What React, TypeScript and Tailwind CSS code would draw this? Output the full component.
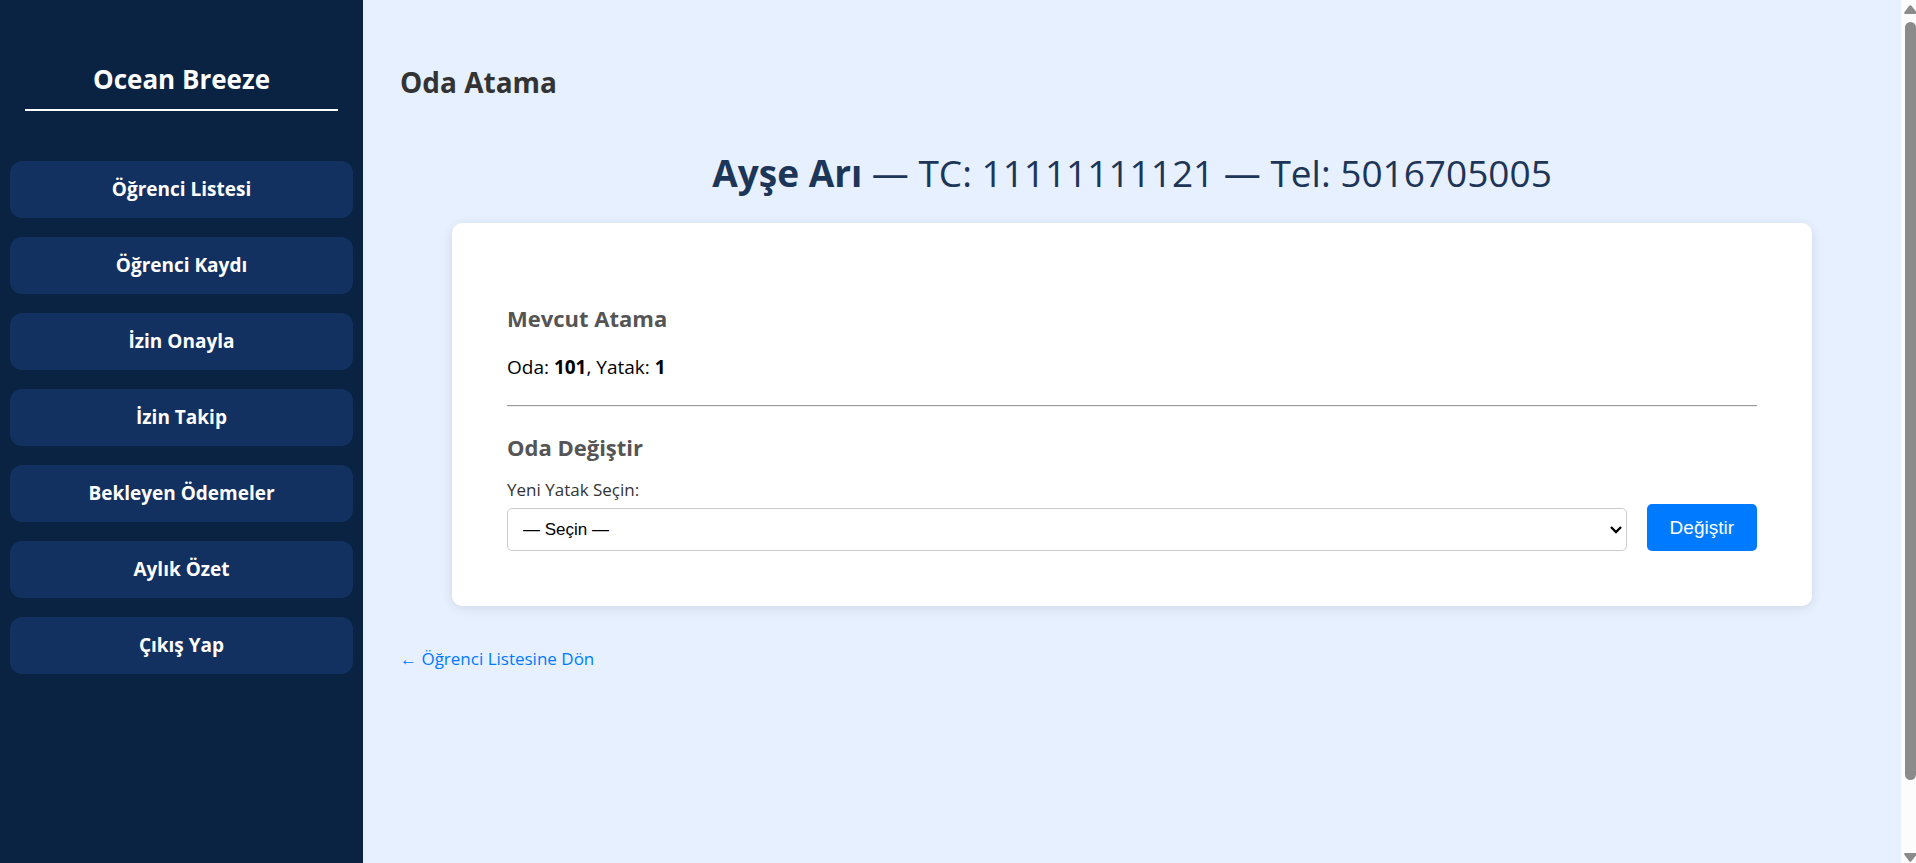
const navItems = [
  'Öğrenci Listesi',
  'Öğrenci Kaydı',
  'İzin Onayla',
  'İzin Takip',
  'Bekleyen Ödemeler',
  'Aylık Özet',
  'Çıkış Yap',
];

function Sidebar() {
  return (
    <aside className="flex w-[363px] shrink-0 flex-col bg-[#0a2342] px-2.5 pt-[61px] text-white">
      <h2 className="mx-[15px] border-b-2 border-white pb-[11px] text-center text-[26px] leading-[37px] font-bold">
        Ocean Breeze
      </h2>
      <nav className="mt-[50px] flex flex-col gap-[19px]">
        {navItems.map((item) => (
          <a
            key={item}
            href="#"
            className="rounded-xl bg-[#133160] py-4 text-center text-[19px] leading-[25px] font-bold"
          >
            {item}
          </a>
        ))}
      </nav>
    </aside>
  );
}

function AssignmentCard() {
  return (
    <section className="mx-auto w-full max-w-[1360px] rounded-[10px] bg-white px-[55px] pt-[79px] pb-[55px] shadow-[0_2px_12px_rgba(0,0,0,0.1)]">
      <h3 className="text-[22px] leading-8 font-bold text-[#555]">Mevcut Atama</h3>
      <p className="mt-5 text-[19px] leading-[26px] text-black">
        Oda: <strong>101</strong>, Yatak: <strong>1</strong>
      </p>
      <hr className="mt-[25px] border-t border-b border-t-[#9a9a9a] border-b-[#eee]" />
      <h3 className="mt-6 text-[22px] leading-8 font-bold text-[#555]">Oda Değiştir</h3>
      <form className="mt-[15px] flex items-end gap-5" onSubmit={(e) => e.preventDefault()}>
        <div className="flex flex-1 flex-col gap-1.5">
          <label htmlFor="bed" className="text-[17px] leading-6 text-[#333]">
            Yeni Yatak Seçin:
          </label>
          <div className="grid items-center">
            <select
              id="bed"
              className="col-start-1 row-start-1 h-[43px] w-full appearance-none rounded-[5px] border border-[#ccc] bg-white px-[15px] font-['Liberation_Sans',sans-serif] text-[17px] text-black"
            >
              <option>— Seçin —</option>
            </select>
            <svg
              aria-hidden="true"
              className="pointer-events-none col-start-1 row-start-1 mr-[5px] justify-self-end"
              width="12"
              height="9"
              viewBox="0 0 12 9"
              fill="none"
              stroke="#000"
              strokeWidth="2.3"
            >
              <path d="M1 2 6 7 11 2" />
            </svg>
          </div>
        </div>
        <button
          type="submit"
          className="rounded-[5px] bg-[#007bff] px-[23px] py-3 font-['Liberation_Sans',sans-serif] text-[19px] leading-[23px] text-white"
        >
          Değiştir
        </button>
      </form>
    </section>
  );
}

function ScrollTrack() {
  return (
    <div aria-hidden="true" className="flex w-[15px] shrink-0 flex-col bg-[#fcfcfc] pt-[5px] pb-px pl-[3px]">
      <svg width="12" height="9" viewBox="0 0 12 9" fill="#8b8b8b">
        <path d="M5.2.7Q6.3-.4 7.4.7L12 6.6V9H1Q-.2 9 .4 7.2Z" />
      </svg>
      <div className="mt-2 ml-px flex flex-1 flex-col">
        <div className="grow-[758] basis-0 rounded-full bg-[#8b8b8b]" />
        <div className="grow-[73] basis-0" />
      </div>
      <svg width="12" height="9" viewBox="0 0 12 9" fill="#8b8b8b">
        <path d="M5.2 8.3Q6.3 9.4 7.4 8.3L12 2.4V0H1Q-.2 0 .4 1.8Z" />
      </svg>
    </div>
  );
}

export default function App() {
  return (
    <div className="flex min-h-screen bg-[#e6f0ff] font-['Open_Sans',sans-serif]">
      <Sidebar />
      <main className="min-w-0 flex-1 px-[37px] pt-[62px]">
        <h1 className="text-[28px] leading-10 font-bold text-[#333]">Oda Atama</h1>
        <p className="mt-11 mb-[23px] text-center text-[37px] leading-[54px] text-[#1d3557]">
          <strong>Ayşe Arı</strong> — TC: 11111111121 — Tel: 5016705005
        </p>
        <AssignmentCard />
        <a href="#" className="mt-[41px] inline-block text-[17px] leading-6 text-[#007bff]">
          ← Öğrenci Listesine Dön
        </a>
      </main>
      <ScrollTrack />
    </div>
  );
}
